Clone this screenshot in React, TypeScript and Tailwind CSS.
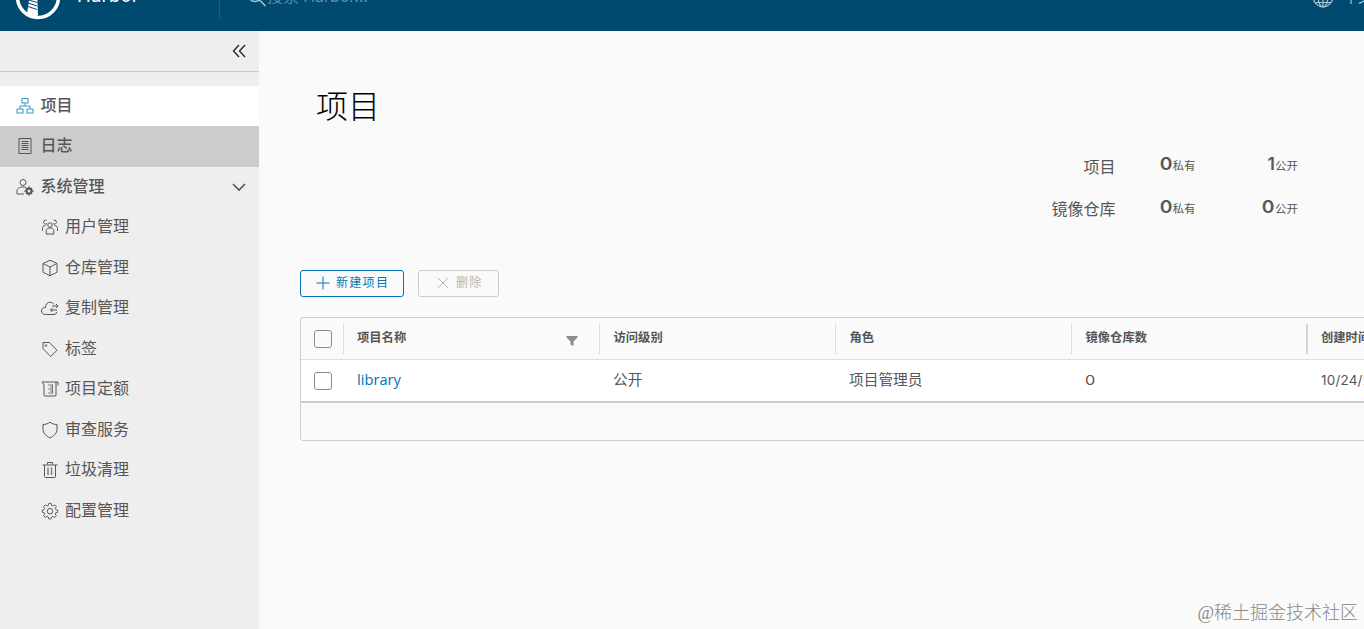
import type { ReactNode } from "react";
import clsx from "clsx";

type NavEntry = { label: string; icon: ReactNode };

function Icon({ children, className }: { children: ReactNode; className?: string }) {
  return (
    <svg viewBox="0 0 36 36" fill="none" stroke="currentColor" strokeWidth="2" strokeLinejoin="round" className={clsx("shrink-0", className ?? "size-[18px]")}>
      {children}
    </svg>
  );
}

const GEAR = "M15.5 3h5l1 4.2 2.8 1.2 3.7-2.3 3.6 3.6-2.3 3.7 1.2 2.8 4 1v4.6l-4 1-1.2 2.8 2.3 3.7-3.6 3.6-3.7-2.3-2.8 1.2-1 4.2h-5l-1-4.2-2.8-1.2L8 33 4.400 29.300l2.300-3.700-1.200-2.800-4-1v-4.600l4-1 1.200-2.800L4.400 9.700 8 6.100l3.700 2.300 2.800-1.200z";

const adminItems: NavEntry[] = [
  {
    label: "用户管理",
    icon: (
      <Icon>
        <circle cx="18" cy="14" r="4.500" />
        <path d="M10.500 32v-7c0-3 3-5 7.500-5s7.500 2 7.500 5v7zM12 11a4 4 0 1 1-1-6.300M24 11a4 4 0 1 0 1-6.300M3 26v-5c0-3.500 2-6 6-6M33 26v-5c0-3.500-2-6-6-6" />
      </Icon>
    ),
  },
  {
    label: "仓库管理",
    icon: (
      <Icon>
        <path d="M18 2.500 32 9v17.500L18 33.500 4 26.500V9zM4 9l14 7 14-7M18 16v17.500" />
      </Icon>
    ),
  },
  {
    label: "复制管理",
    icon: (
      <Icon>
        <path d="M31 26c0 3-2 5-5 5H9c-5 0-8-3-8-7 0-4.500 3.500-7.500 8-7C9.500 10 13 6.500 18 6.500c3.500 0 6 1.500 7.500 4M22 14h12M30 10l4 4-4 4M32 22H19M23 18l-4 4 4 4" />
      </Icon>
    ),
  },
  {
    label: "标签",
    icon: (
      <Icon>
        <path d="M4 5h12.500L32 20.500 19.500 33 4 17.500z" />
        <circle cx="10" cy="11" r="1.500" />
      </Icon>
    ),
  },
  {
    label: "项目定额",
    icon: (
      <Icon>
        <path d="M2 4h32v7M2 4l4 6v20a2 2 0 0 0 2 2h20a2 2 0 0 0 2-2V4" />
        <path d="M14 10h10M18 14h6M14 18h10M18 22h6M14 26h10M23 9v18" opacity=".7" />
      </Icon>
    ),
  },
  {
    label: "审查服务",
    icon: (
      <Icon>
        <path d="M18 2.500c4 3 9 4.500 14 4.500v10c0 7-6 13-14 17C10 30 4 24 4 17V7c5 0 10-1.500 14-4.500z" />
      </Icon>
    ),
  },
  {
    label: "垃圾清理",
    icon: (
      <Icon>
        <path d="M3 8h30M7 8v23a2 2 0 0 0 2 2h18a2 2 0 0 0 2-2V8M13 7V3h10v4" />
        <path d="M14 13v15M21 13v15" strokeWidth="3" opacity=".7" />
      </Icon>
    ),
  },
  {
    label: "配置管理",
    icon: (
      <Icon>
        <path d={GEAR} transform="translate(1 0) scale(.94)" />
        <circle cx="18" cy="18.500" r="5.500" />
      </Icon>
    ),
  },
];

const columns = [
  { title: "访问级别", value: "公开" },
  { title: "角色", value: "项目管理员" },
  { title: "镜像仓库数", value: "0" },
];

function Header() {
  return (
    <header className="flex h-[31px] shrink-0 items-end overflow-hidden bg-[#004a70] text-white">
      <div className="flex h-[60px] w-full shrink-0 items-center">
        <div className="flex h-full w-[219px] items-center pl-[15px]">
          <svg viewBox="0 0 46 46" className="mt-[-9px] size-[46px] shrink-0">
            <circle cx="23" cy="23" r="20.500" fill="none" stroke="#fff" strokeWidth="3.500" />
            <path d="M15 19h7l1 22-3 3-8-4z" fill="#fff" />
            <path d="m13 29 9 3M13 32.500l9 3M14 26l8 2.500" stroke="#004a70" strokeWidth="1" />
          </svg>
          <span className="mt-[-11px] ml-4 text-[18.5px] tracking-[0.2px]">Harbor</span>
        </div>
        <div className="mt-[-2px] h-10 w-px bg-[#1f5d80]" />
        <div className="mt-[-10px] ml-[27px] flex items-center text-[#5f8fab]">
          <svg viewBox="0 0 20 20" fill="none" stroke="#a8c3d1" strokeWidth="1.500" className="mt-0.5 size-5">
            <circle cx="8" cy="8" r="6.500" />
            <path d="m12.500 13 6 6" />
          </svg>
          <span className="text-base tracking-[-0.1px]">搜索 Harbor...</span>
        </div>
        <div className="mt-[-8px] mr-[-36px] ml-auto flex shrink-0 items-center gap-2.5 text-[#a8c5d5]">
          <Icon className="size-[22px]">
            <circle cx="18" cy="18" r="16" />
            <ellipse cx="18" cy="18" rx="8" ry="16" />
            <path d="M18 2v32M2 18h32M5 27h26M5 9h26" />
          </Icon>
          <span className="text-sm">中文简体</span>
        </div>
      </div>
    </header>
  );
}

function Sidebar() {
  return (
    <nav className="w-[259px] shrink-0 bg-[#eee] text-base text-[#565656]">
      <div className="flex h-[41px] items-center justify-end border-b border-[#ccc] pr-[13px]">
        <svg viewBox="0 0 14 14" fill="none" stroke="#222" strokeWidth="1.300" className="size-3.5">
          <path d="M7 1 1.500 7 7 13M13 1 7.500 7l5.500 6" />
        </svg>
      </div>
      <div className="mt-3.5 flex h-10 items-center gap-[6.5px] bg-white pl-4 font-medium">
        <Icon className="size-[18px] text-[#3b9cc9]">
          <path d="M12 3h12v9H12zM2 24h12v8H2zM22 24h12v8H22zM18 12v6M8 24v-6h20v6" strokeWidth="2.200" />
        </Icon>
        <span className="pb-0.5">项目</span>
      </div>
      <div className="flex h-[41px] items-center gap-[6.5px] bg-[#ccc] pb-0.5 pl-4 font-medium">
        <Icon>
          <path d="M6 3h24v30H6zM11 9h14M11 13h14M11 17h14M11 21h14M11 25h14" />
        </Icon>
        <span className="pb-0.5">日志</span>
      </div>
      <div className="flex h-10 items-center gap-[6.5px] pr-[13px] pl-4 font-medium">
        <Icon>
          <circle cx="14" cy="9" r="6" />
          <path d="M16 32H2v-6c0-5 5-8 12-8 2 0 4 .300 6 1" />
          <circle cx="26" cy="26" r="5" strokeWidth="4" />
          <path d="M26 17v4M26 31v4M17 26h4M31 26h4M20 20l2 2M30 30l2 2M32 20l-2 2M20 32l2-2" strokeWidth="3" />
        </Icon>
        <span className="flex-1 pb-0.5">系统管理</span>
        <svg viewBox="0 0 14 14" fill="none" stroke="currentColor" strokeWidth="1.600" className="size-3.5">
          <path d="m1 4 6 6 6-6" />
        </svg>
      </div>
      {adminItems.map((item) => (
        <div key={item.label} className="flex h-[40.5px] items-center gap-1.5 pl-[41px]">
          {item.icon}
          <span className="pb-0.5">{item.label}</span>
        </div>
      ))}
    </nav>
  );
}

function Stat({ value, label }: { value: number; label: string }) {
  return (
    <div className="flex items-baseline justify-end">
      <span className={clsx("text-[17.5px] leading-6 font-semibold", value === 0 && "inline-block origin-right scale-x-110")}>{value}</span>
      <span className="text-[11.5px] leading-5">{label}</span>
    </div>
  );
}

function Summary() {
  return (
    <div className="ml-auto grid w-[264px] auto-rows-[28px] grid-cols-[81.5px_80px_102.5px] gap-y-[15px] text-[#565656]">
      <div className="mt-[3px] text-right text-base leading-6">项目</div>
      <Stat value={0} label="私有" />
      <Stat value={1} label="公开" />
      <div className="mt-0.5 text-right text-base leading-6 whitespace-nowrap">镜像仓库</div>
      <Stat value={0} label="私有" />
      <Stat value={0} label="公开" />
    </div>
  );
}

function Checkbox() {
  return <span className="size-[18px] rounded-[3px] border border-[#8c8c8c]" />;
}

function ProjectGrid() {
  return (
    <div className="mt-5 w-[1130px] shrink-0 rounded-[3px] border border-[#ccc] text-[#565656]">
      <div className="flex h-[41px] items-center text-[12.3px] font-bold">
        <div className="flex w-[42px] shrink-0 justify-center pl-0.5"><Checkbox /></div>
        <div className="flex h-[30px] w-64 shrink-0 items-center justify-between border-l border-[#ddd] pr-[21px] pl-[13px]">
          <span>项目名称</span>
          <svg viewBox="0 0 12 12" fill="#8c8c8c" className="mt-1 size-3">
            <path d="M.5 1h11v1.500L7.500 6.500V11l-3-1.500v-3l-4-4z" />
          </svg>
        </div>
        {columns.map((col) => (
          <div key={col.title} className="flex h-[30px] w-[236px] shrink-0 items-center border-l border-[#ddd] pl-[13.5px]">{col.title}</div>
        ))}
        <div className="-ml-px flex h-[30px] shrink-0 items-center border-l-2 border-[#d4d4d4] pl-[13px]">创建时间</div>
      </div>
      <div className="flex h-[44px] items-center border-t border-b-2 border-t-[#ddd] border-b-[#ccc] bg-white text-[14.7px] whitespace-nowrap">
        <div className="flex w-[42px] shrink-0 justify-center"><span className="flex pl-0.5"><Checkbox /></span></div>
        <div className="w-64 shrink-0 pb-0.5 pl-3.5">
          <a className="font-['Open_Sans'] text-[14.7px] text-[#0072b8]">library</a>
        </div>
        {columns.map((col) => (
          <div key={col.title} className="w-[236px] shrink-0 pl-3.5">
            <span className={clsx("inline-block origin-left", col.value === "0" && "scale-x-120 text-[13.5px]")}>{col.value}</span>
          </div>
        ))}
        <div className="shrink-0 pl-3.5 text-[13.5px] tracking-[0.2px]">10/24/22, 3:12 PM</div>
      </div>
      <div className="h-[37px]" />
    </div>
  );
}

export default function App() {
  return (
    <div className="relative flex h-[629px] w-[1364px] flex-col overflow-hidden bg-[#fafafa] font-[Inter,'Noto_Sans_CJK_SC',sans-serif]">
      <Header />
      <div className="flex min-h-0 flex-1">
        <Sidebar />
        <main className="flex min-w-0 flex-1 flex-col overflow-hidden pl-[41px]">
          <h1 className="mt-[52px] pl-4 text-[32px] leading-[48px] font-light text-black">项目</h1>
          <div className="mt-[21px] pr-[66px]"><Summary /></div>
          <div className="mt-[47px] flex gap-3.5 text-xs tracking-[1.3px]">
            <button className="flex h-[27px] w-[104px] items-center gap-1.5 rounded-[3px] border border-[#0079b8] pl-[15px] text-[#0079b8]">
              <svg viewBox="0 0 14 14" fill="none" stroke="currentColor" className="mb-px size-3.5"><path d="M7 .5v13M.5 7h13" /></svg>
              <span className="pb-0.5">新建项目</span>
            </button>
            <button className="flex h-[27px] w-[81px] items-center gap-[7px] rounded-[3px] border border-[#ccc] pl-[18px] text-[#b5b5b5]">
              <svg viewBox="0 0 12 12" fill="none" stroke="currentColor" className="mb-px size-3"><path d="m1 1 10 10M11 1 1 11" /></svg>
              <span className="pb-0.5">删除</span>
            </button>
          </div>
          <ProjectGrid />
        </main>
      </div>
      <div className="absolute right-1.5 bottom-1 font-['Liberation_Serif','Noto_Sans_CJK_SC',serif] text-lg leading-6 font-light text-[#888]">@稀土掘金技术社区</div>
    </div>
  );
}
